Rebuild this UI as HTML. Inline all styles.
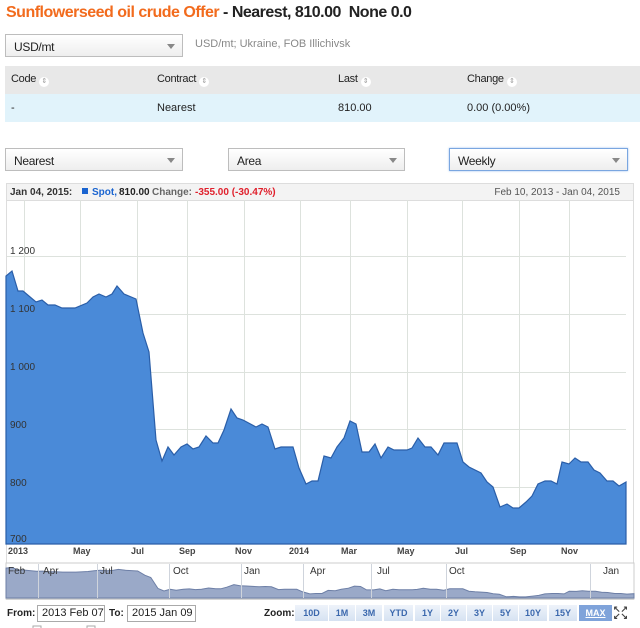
<!DOCTYPE html>
<html><head><meta charset="utf-8">
<style>
*{margin:0;padding:0;box-sizing:border-box}
body{width:640px;height:628px;overflow:hidden;background:#fff;font-family:"Liberation Sans",Arial,sans-serif;position:relative;color:#222}
.abs{position:absolute}
.title{left:6px;top:4px;font-size:16px;font-weight:bold;letter-spacing:-0.5px}
.title .o{color:#f26b1d}
.sel{position:absolute;height:23px;border:1px solid #bdbdbd;background:linear-gradient(#fff,#eee);font-size:12px;padding:5px 0 0 8px;color:#222;letter-spacing:-0.3px}
.sel:after{content:"";position:absolute;right:7px;top:9px;border-left:4px solid transparent;border-right:4px solid transparent;border-top:5px solid #888}
.th{font-size:11px;position:absolute;top:73px;letter-spacing:-0.3px}
.th i{display:inline-block;width:10px;height:10px;border-radius:5px;background:#fff;margin-left:3px;vertical-align:-1px;font-style:normal;font-size:7px;color:#999;text-align:center;line-height:10px}
.td{font-size:11px;position:absolute;top:102px}
.btn{position:absolute;top:605px;height:16px;background:linear-gradient(#eef3fa,#d6e2f2);color:#3b68ad;font-size:9px;font-weight:bold;text-align:center;line-height:16px}
.inp{position:absolute;top:605px;height:17px;border:1px solid #aaa;font-size:11px;padding:1px 0 0 4px}
</style></head><body>
<div class="abs title"><span class="o">Sunflowerseed oil crude Offer</span> - Nearest, 810.00&nbsp; None 0.0</div>
<div class="sel" style="left:5px;top:34px;width:178px">USD/mt</div>
<div class="abs" style="left:195px;top:38px;font-size:11px;color:#888">USD/mt; Ukraine, FOB Illichivsk</div>
<div class="abs" style="left:5px;top:66px;width:635px;height:28px;background:#e8e8e8"></div>
<div class="abs" style="left:5px;top:94px;width:635px;height:28px;background:#e1f3fb"></div>
<div class="th" style="left:11px">Code<i>⇕</i></div>
<div class="th" style="left:157px">Contract<i>⇕</i></div>
<div class="th" style="left:338px">Last<i>⇕</i></div>
<div class="th" style="left:467px">Change<i>⇕</i></div>
<div class="td" style="left:11px">-</div>
<div class="td" style="left:157px">Nearest</div>
<div class="td" style="left:338px">810.00</div>
<div class="td" style="left:467px">0.00 (0.00%)</div>
<div class="sel" style="left:5px;top:148px;width:178px">Nearest</div>
<div class="sel" style="left:228px;top:148px;width:177px">Area</div>
<div class="sel" style="left:449px;top:148px;width:179px;border-color:#7aa6e0;box-shadow:0 0 2px #9cc0ee">Weekly</div>

<svg class="abs" style="left:0;top:0" width="640" height="628" id="s">
<rect x="6.5" y="183.5" width="627" height="416" fill="#fff" stroke="#ddd"/>
<rect x="7" y="184" width="626" height="16" fill="#f3f3f3"/>
<line x1="7" y1="200.5" x2="633" y2="200.5" stroke="#ddd"/>
<g font-family="Liberation Sans,Arial,sans-serif" font-size="10" font-weight="bold">
<text x="10" y="195" fill="#333">Jan 04, 2015:</text>
<rect x="82" y="188" width="6" height="6" fill="#1a64d0"/>
<text x="92" y="195" fill="#1a64d0">Spot,</text>
<text x="119" y="195" fill="#222">810.00</text>
<text x="152" y="195" fill="#666">Change:</text>
<text x="195" y="195" fill="#e0202c">-355.00 (-30.47%)</text>
<text x="620" y="195" fill="#555" font-weight="normal" text-anchor="end">Feb 10, 2013 - Jan 04, 2015</text>
</g>
<g id="grid" stroke="#dde2dd" stroke-width="1"></g>
<path id="area" fill="#4a8ad8" stroke="#2a5ea8" stroke-width="1.2"/>
<g font-family="Liberation Sans,Arial,sans-serif" font-size="10" fill="#333">
<text x="10" y="254">1 200</text><text x="10" y="312">1 100</text><text x="10" y="370">1 000</text>
<text x="10" y="428">900</text><text x="10" y="486">800</text><text x="10" y="542">700</text>
</g>
<rect x="7" y="545" width="626" height="12" fill="#fff"/>
<g font-family="Liberation Sans,Arial,sans-serif" font-size="9" font-weight="bold" fill="#444">
<text x="8" y="554">2013</text><text x="73" y="554">May</text><text x="131" y="554">Jul</text><text x="179" y="554">Sep</text>
<text x="235" y="554">Nov</text><text x="289" y="554">2014</text><text x="341" y="554">Mar</text><text x="397" y="554">May</text>
<text x="455" y="554">Jul</text><text x="510" y="554">Sep</text><text x="561" y="554">Nov</text>
</g>
<rect x="6" y="563" width="628" height="36" fill="#fff" stroke="#ccc"/>
<path id="nav" fill="#9aa9c8" stroke="#6d7fa6" stroke-width="1"/>
<g id="ngrid" stroke="#cfd4dc"></g>
<g font-family="Liberation Sans,Arial,sans-serif" font-size="10" fill="#333">
<text x="8" y="574">Feb</text><text x="43" y="574">Apr</text><text x="100" y="574">Jul</text><text x="173" y="574">Oct</text>
<text x="244" y="574">Jan</text><text x="310" y="574">Apr</text><text x="377" y="574">Jul</text><text x="449" y="574">Oct</text><text x="603" y="574">Jan</text>
</g>
<rect x="33" y="626" width="8" height="4" fill="none" stroke="#aaa"/><rect x="87" y="626" width="8" height="4" fill="none" stroke="#aaa"/>
</svg>

<div class="abs" style="left:7px;top:608px;font-size:10px;font-weight:bold">From:</div>
<div class="inp" style="left:37px;width:68px">2013 Feb 07</div>
<div class="abs" style="left:109px;top:608px;font-size:10px;font-weight:bold">To:</div>
<div class="inp" style="left:127px;width:69px">2015 Jan 09</div>
<div class="abs" style="left:264px;top:608px;font-size:10px;font-weight:bold">Zoom:</div>
<div class="btn" style="left:295px;width:33px">10D</div>
<div class="btn" style="left:329px;width:26px">1M</div>
<div class="btn" style="left:356px;width:26px">3M</div>
<div class="btn" style="left:384px;width:29px">YTD</div>
<div class="btn" style="left:415px;width:25px">1Y</div>
<div class="btn" style="left:441px;width:25px">2Y</div>
<div class="btn" style="left:467px;width:25px">3Y</div>
<div class="btn" style="left:493px;width:25px">5Y</div>
<div class="btn" style="left:519px;width:28px">10Y</div>
<div class="btn" style="left:549px;width:28px">15Y</div>
<div class="btn" style="left:579px;width:33px;background:#7fa3da;color:#fff;text-decoration:underline">MAX</div>
<div class="abs" style="left:613px;top:606px;font-size:9px;color:#444;line-height:7px;font-weight:bold">↖↗<br>↙↘</div>

<script>
var p=[[6,276],[12,271],[18,291],[23,291],[36,302],[42,300],[48,305],[55,305],[62,308],[75,308],[87,303],[93,297],[99,294],[106,297],[112,294],[117,286],[124,294],[136,299],[143,333],[149,352],[156,440],[162,461],[168,447],[174,455],[181,447],[187,444],[193,449],[199,447],[206,436],[213,443],[218,443],[224,430],[231,409],[237,418],[243,420],[256,427],[262,424],[268,427],[275,449],[281,447],[293,447],[299,468],[306,484],[312,481],[318,481],[324,456],[331,458],[337,447],[344,438],[350,421],[356,424],[362,452],[369,452],[375,444],[381,458],[388,447],[394,450],[407,450],[412,448],[418,438],[425,447],[431,447],[438,455],[444,443],[457,443],[463,462],[469,467],[481,473],[487,482],[493,487],[500,507],[507,504],[513,508],[519,508],[526,502],[532,496],[538,484],[545,481],[551,481],[557,484],[562,462],[569,464],[575,458],[581,462],[588,462],[594,470],[600,473],[607,481],[613,481],[619,486],[626,482]];
var d="M6,544";p.forEach(function(q){d+="L"+q[0]+","+q[1]});d+="L626,544Z";
document.getElementById("area").setAttribute("d",d);
var g="";[256,314,372,429,487].forEach(function(y){g+='<line x1="7" x2="626" y1="'+(y+.5)+'" y2="'+(y+.5)+'"/>'});
[24,80,137,187,244,300,350,407,462,519,569].forEach(function(x){g+='<line y1="200" y2="544" x1="'+(x+.5)+'" x2="'+(x+.5)+'"/>'});
document.getElementById("grid").innerHTML=g;
var n="M6,598";p.forEach(function(q){var x=6+(q[0]-6)*628/620,y=567+(q[1]-267)*30/242;n+="L"+x.toFixed(1)+","+y.toFixed(1)});n+="L634,598Z";
document.getElementById("nav").setAttribute("d",n);
var h="";[38,97,169,241,303,371,446,590].forEach(function(x){h+='<line y1="564" y2="598" x1="'+(x+.5)+'" x2="'+(x+.5)+'"/>'});
document.getElementById("ngrid").innerHTML=h;
</script>
</body></html>
